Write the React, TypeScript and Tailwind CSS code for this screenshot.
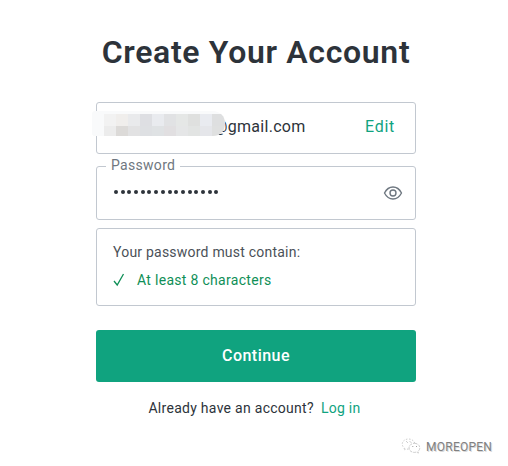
const MOSAIC: string[] = [
  'bg-[#f9fafb]', 'bg-[#f2f2f2]', 'bg-[#f0eeec]', 'bg-[#e9eaec]', 'bg-[#dedfe3]', 'bg-[#e9ebef]', 'bg-[#e1e2e4]', 'bg-[#e5e7e6]', 'bg-[#dfe0df]', 'bg-[#e9ebf0]', 'bg-[#dedfe0]',
  'bg-[#f9fafb]', 'bg-[#ececec]', 'bg-[#dcdad8]', 'bg-[#e2e2e3]', 'bg-[#dee0e3]', 'bg-[#dfe2e4]', 'bg-[#e1dfe1]', 'bg-[#e5e6e7]', 'bg-[#e2e4e3]', 'bg-[#e5e6ea]', 'bg-[#dfe0e0]',
];

function Mosaic() {
  return (
    <div className="absolute left-[-5px] top-[8px] h-[25px] w-[133px] overflow-hidden rounded-l-[3px] rounded-r-[12px] bg-[#f9fafb] pt-[3px]">
      <div className="grid w-[133px] grid-cols-[repeat(10,12px)_13px]">
        {MOSAIC.map((c, i) => (
          <div key={i} className={'h-3 ' + c} />
        ))}
      </div>
    </div>
  );
}

function EyeIcon() {
  return (
    <svg width="20" height="16" viewBox="0 0 20 16" fill="none" stroke="#6e7780" strokeWidth="1.4">
      <path d="M1.500 8C3.400 4.300 6.400 2 10 2s6.600 2.300 8.500 6c-1.900 3.700-4.900 6-8.500 6S3.400 11.700 1.500 8z" strokeLinejoin="round" />
      <circle cx="10" cy="8" r="3" />
    </svg>
  );
}

function WeChatIcon() {
  return (
    <svg width="20" height="17" viewBox="0 0 20 17" fill="none" stroke="#b8b8b8" strokeWidth="0.7">
      <path d="M7.500 11.200c-.8 0-1.600-.1-2.300-.3L2.800 12l.6-2C2 9 1.200 7.600 1.200 6.100 1.200 3.300 4 1 7.500 1c3.100 0 5.700 1.800 6.200 4.200" strokeDasharray="1.500 1.500" />
      <path d="M13.400 5.300c3 0 5.400 2 5.400 4.600 0 1.400-.7 2.600-1.900 3.500l.5 1.700-2-1c-.6.2-1.300.3-2 .3-3 0-5.400-2-5.400-4.500s2.400-4.600 5.400-4.600z" strokeDasharray="3 1" />
      <path d="M5.500 3.500l1 1M9 3.500l1 1M11.300 8.500h1M15 8.500h1" stroke="#777" />
    </svg>
  );
}

export default function App() {
  return (
    <div className="relative h-[466px] w-[508px] overflow-hidden bg-white pl-24 font-['Roboto','Liberation_Sans',sans-serif] text-[#2d333a]">
      <main className="w-80 pt-8">
        <h1 className="flex h-10 items-center justify-center whitespace-nowrap text-[32px] font-semibold leading-10 tracking-[0.67px]">Create Your Account</h1>

        <div className="relative mt-[30px] flex h-[52px] items-center justify-between rounded-[3px] border border-[#c2c8d0] pl-[116px] pr-5 text-base">
          <span className="pb-0.5 tracking-[0.3px]">@gmail.com</span>
          <a className="pb-0.5 tracking-[0.7px] text-[#10a37f]">Edit</a>
          <Mosaic />
        </div>

        <div className="relative mt-3 flex h-[54px] items-center justify-between rounded-[3px] border border-[#c2c8d0] pl-[17px] pr-3">
          <label className="absolute left-[9px] top-[-12px] bg-white px-[5px] text-sm leading-5 tracking-[0.3px] text-[#6f7780]">Password</label>
          <div className="flex gap-[2.700px] pb-[2px]">
            {Array.from({ length: 16 }, (_, i) => (
              <span key={i} className="h-1 w-1 rounded-full bg-[#2d333a]" />
            ))}
          </div>
          <EyeIcon />
        </div>

        <section className="mt-2 h-[78px] rounded-[3px] border border-[#c2c8d0] px-4 pt-[13px] text-sm">
          <p className="leading-5 tracking-[0.22px] text-[#4b5158]">Your password must contain:</p>
          <div className="mt-2 flex items-center leading-5 text-[#0f8f57]">
            <svg width="12" height="14" viewBox="0 0 12 14" fill="none" stroke="currentColor" strokeWidth="1.3">
              <path d="M1 8l3.200 4L10.500 1" />
            </svg>
            <span className="ml-3 tracking-[0.3px]">At least 8 characters</span>
          </div>
        </section>

        <button className="mt-6 block h-[52px] w-full rounded-[3px] bg-[#10a37f] pb-px text-base font-medium tracking-[0.45px] text-white">Continue</button>

        <p className="mt-4 flex justify-center gap-[7px] whitespace-nowrap pr-[3px] text-sm leading-5 tracking-[0.28px]">
          <span>Already have an account?</span>
          <a className="text-[#10a37f]">Log in</a>
        </p>
      </main>

      <div className="absolute left-[401px] top-[438px] flex items-center gap-[5px]">
        <WeChatIcon />
        <span className="text-xs leading-4 tracking-[0.25px] text-[#808080] [text-shadow:1px_1px_0_#d8d8d8]">MOREOPEN</span>
      </div>
    </div>
  );
}
